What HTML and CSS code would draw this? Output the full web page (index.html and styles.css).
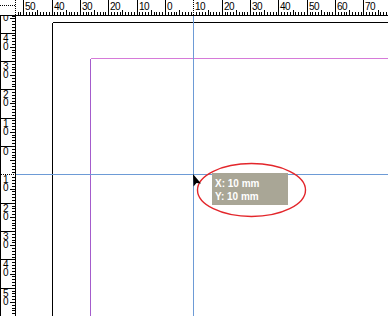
FILE: index.html
```html
<!DOCTYPE html>
<html lang="en">
<head>
    <meta charset="UTF-8">
    <meta name="viewport" content="width=device-width, initial-scale=1.0">
    <title>Layout Guides</title>
    <link rel="stylesheet" href="styles.css">
</head>
<body>
    <div class="workspace">
        <!-- zero point corner -->
        <svg class="ruler-corner" width="16" height="16">
            <line class="dotted" x1="0" y1="5.5" x2="15" y2="5.5"/>
            <line class="dotted" x1="15.5" y1="0" x2="15.5" y2="15"/>
            <line class="edge" x1="0" y1="15.5" x2="16" y2="15.5"/>
        </svg>

        <svg class="ruler ruler-top" width="372" height="16">
            <path id="top-ticks" class="ticks"/>
            <g class="labels">
                <text x="9" y="10">50</text>
                <text x="38" y="10">40</text>
                <text x="66" y="10">30</text>
                <text x="94" y="10">20</text>
                <text x="123" y="10">10</text>
                <text x="151" y="10">0</text>
                <text x="179" y="10">10</text>
                <text x="208" y="10">20</text>
                <text x="236" y="10">30</text>
                <text x="264" y="10">40</text>
                <text x="293" y="10">50</text>
                <text x="321" y="10">60</text>
                <text x="349" y="10">70</text>
            </g>
            <line class="edge" x1="0" y1="15.5" x2="372" y2="15.5"/>
            <line class="cursor-clear" x1="177.5" y1="0" x2="177.5" y2="15"/>
            <line class="dotted" x1="177.5" y1="0" x2="177.5" y2="15"/>
        </svg>

        <!-- vertical ruler: digits stacked one above the other -->
        <svg class="ruler ruler-left" width="16" height="300">
            <path id="left-ticks" class="ticks"/>
            <g class="labels">
                <text x="3" y="5">0</text>
                <text x="3" y="26">4</text><text x="3" y="34">0</text>
                <text x="3" y="54">3</text><text x="3" y="62">0</text>
                <text x="3" y="82">2</text><text x="3" y="90">0</text>
                <text x="3" y="111">1</text><text x="3" y="119">0</text>
                <text x="3" y="139">0</text>
                <text x="3" y="167">1</text><text x="3" y="175">0</text>
                <text x="3" y="196">2</text><text x="3" y="204">0</text>
                <text x="3" y="224">3</text><text x="3" y="232">0</text>
                <text x="3" y="252">4</text><text x="3" y="260">0</text>
                <text x="3" y="281">5</text><text x="3" y="289">0</text>
            </g>
            <line class="edge" x1="15.5" y1="0" x2="15.5" y2="300"/>
            <line class="edge" x1="0.5" y1="0" x2="0.5" y2="300"/>
            <line class="cursor-clear" x1="1" y1="158.5" x2="15" y2="158.5"/>
            <line class="dotted" x1="1" y1="158.5" x2="15" y2="158.5"/>
        </svg>

        <div class="canvas">
            <svg class="canvas-art" width="372" height="300">
                <path class="page-edge" d="M36.5 6.5 H372 M36.5 6.5 V300"/>
                <path class="margin-top" d="M74.5 42.5 H372"/>
                <path class="margin-left" d="M74.5 42.5 V300"/>
                <path class="guide" d="M177.5 0 V300 M0 158.5 H372"/>
                <ellipse class="highlight" cx="235.5" cy="174" rx="54" ry="26.5"/>
                <polygon class="pointer" points="177,158 177.5,170.5 180.5,167 185,167.5"/>
            </svg>
            <div class="coords-tip">
                <div>X: 10 mm</div>
                <div>Y: 10 mm</div>
            </div>
        </div>
    </div>

    <script src="ruler.js"></script>
</body>
</html>
```

FILE: styles.css
```css
/* Document window with rulers, guides and the pointer tooltip */
body {
    margin: 0;
    background-color: #fff;
    font-family: "Liberation Sans", Arial, sans-serif;
}
.workspace {
    display: grid;
    grid-template-columns: 16px 372px;
    grid-template-rows: 16px 300px;
    width: 388px;
    height: 316px;
    overflow: hidden;
}
svg {
    display: block;
}

/* --- Rulers --- */
.ruler {
    background-color: #fff;
    overflow: hidden;
}
.ruler line,
.ruler path,
.ruler-corner line {
    shape-rendering: crispEdges;
}
.ticks,
.edge {
    stroke: #000;
    stroke-width: 1;
    fill: none;
}
.dotted {
    stroke: #000;
    stroke-width: 1;
    stroke-dasharray: 1 1;
}
.cursor-clear {
    stroke: #fff;
    stroke-width: 1;
}
.labels text {
    font-family: "Liberation Sans", Arial, sans-serif;
    font-size: 10px;
    letter-spacing: -0.5px;
    fill: #000;
}

/* --- Canvas --- */
.canvas {
    position: relative;
    background-color: #fff;
    overflow: hidden;
}
.canvas-art path {
    fill: none;
    stroke-width: 1;
    shape-rendering: crispEdges;
}
.page-edge {
    stroke: #000;
}
.margin-top {
    stroke: #d67ad9;
}
.margin-left {
    stroke: #a45ccc;
}
.guide {
    stroke: #6d9bd6;
}
.highlight {
    fill: none;
    stroke: #e3262b;
    stroke-width: 1.4;
}
.pointer {
    fill: #000;
}
.coords-tip {
    position: absolute;
    left: 196px;
    top: 157px;
    width: 76px;
    height: 32px;
    box-sizing: border-box;
    padding: 4px 3px 0;
    background-color: #a9a696;
    color: #fff;
    font-size: 10px;
    font-weight: bold;
    line-height: 13px;
    white-space: nowrap;
}
```

FILE: ruler.js
```js
// millimetre ticks, 72 dpi: 2.835px per mm
const PX_PER_MM = 2.835;

function tickLength(mm) {
    if (mm % 10 === 0) return 15;
    if (mm % 5 === 0) return 5;
    return 3;
}

function buildTicks(id, origin, from, to, vertical) {
    let d = "";
    for (let mm = from; mm <= to; mm++) {
        const pos = Math.round(origin + mm * PX_PER_MM) + 0.5;
        const len = tickLength(Math.abs(mm));
        if (vertical) {
            d += "M" + (15 - len) + " " + pos + " H15 ";
        } else {
            d += "M" + pos + " " + (15 - len) + " V15 ";
        }
    }
    document.getElementById(id).setAttribute("d", d);
}

buildTicks("top-ticks", 149, -53, 79, false);
buildTicks("left-ticks", 130, -47, 60, true);
```
